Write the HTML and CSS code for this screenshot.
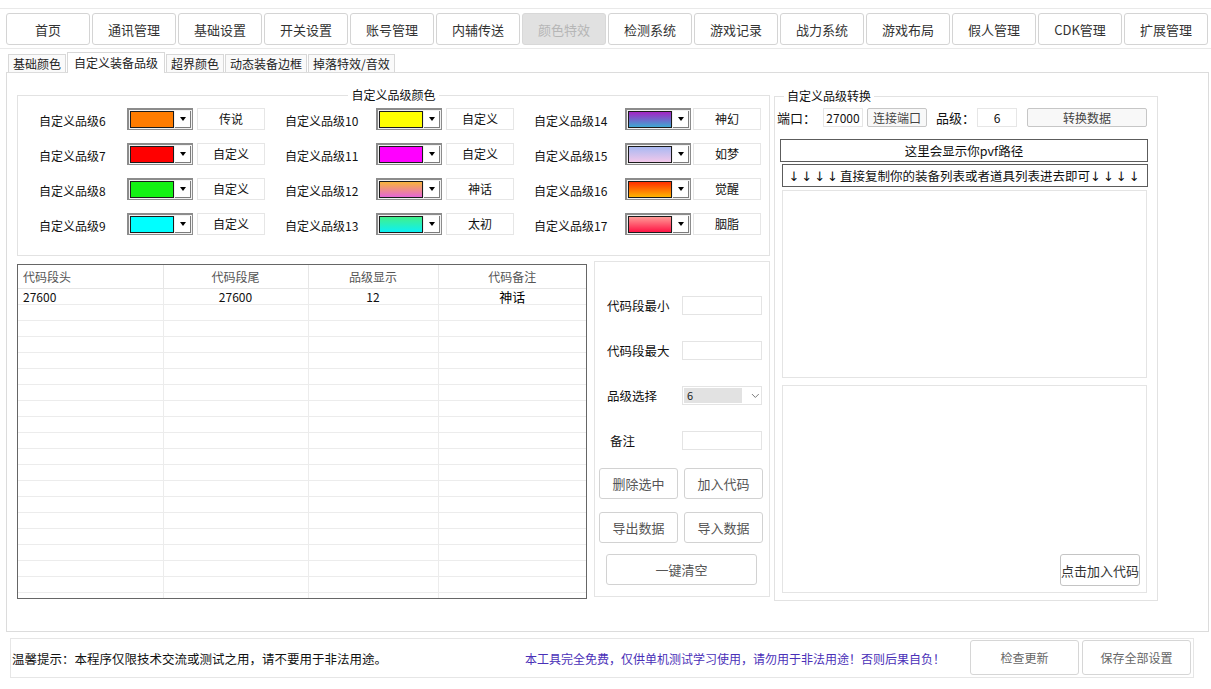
FILE: index.html
```html
<!DOCTYPE html>
<html lang="zh-CN">
<head>
  <meta charset="UTF-8">
  <title>颜色特效 - 自定义装备品级</title>
  <link rel="stylesheet" href="styles.css">
</head>
<body>
  <div class="topnav">
    <button class="nav-btn">首页</button>
    <button class="nav-btn">通讯管理</button>
    <button class="nav-btn">基础设置</button>
    <button class="nav-btn">开关设置</button>
    <button class="nav-btn">账号管理</button>
    <button class="nav-btn">内辅传送</button>
    <button class="nav-btn" disabled>颜色特效</button>
    <button class="nav-btn">检测系统</button>
    <button class="nav-btn">游戏记录</button>
    <button class="nav-btn">战力系统</button>
    <button class="nav-btn">游戏布局</button>
    <button class="nav-btn">假人管理</button>
    <button class="nav-btn">CDK管理</button>
    <button class="nav-btn">扩展管理</button>
  </div>

  <div class="tabs">
    <span class="tab">基础颜色</span>
    <span class="tab active">自定义装备品级</span>
    <span class="tab">超界颜色</span>
    <span class="tab">动态装备边框</span>
    <span class="tab">掉落特效/音效</span>
  </div>

  <div class="panel">
    <div class="left-col">
      <fieldset class="group colors">
        <legend>自定义品级颜色</legend>
        <div class="color-grid">
          <span class="q-label">自定义品级6</span>
          <div class="combo"><span class="swatch q6"></span><span class="drop"></span></div>
          <span class="q-name">传说</span>
          <span class="q-label shift">自定义品级10</span>
          <div class="combo"><span class="swatch q10"></span><span class="drop"></span></div>
          <span class="q-name">自定义</span>
          <span class="q-label shift">自定义品级14</span>
          <div class="combo"><span class="swatch q14"></span><span class="drop"></span></div>
          <span class="q-name">神幻</span>

          <span class="q-label">自定义品级7</span>
          <div class="combo"><span class="swatch q7"></span><span class="drop"></span></div>
          <span class="q-name">自定义</span>
          <span class="q-label shift">自定义品级11</span>
          <div class="combo"><span class="swatch q11"></span><span class="drop"></span></div>
          <span class="q-name">自定义</span>
          <span class="q-label shift">自定义品级15</span>
          <div class="combo"><span class="swatch q15"></span><span class="drop"></span></div>
          <span class="q-name">如梦</span>

          <span class="q-label">自定义品级8</span>
          <div class="combo"><span class="swatch q8"></span><span class="drop"></span></div>
          <span class="q-name">自定义</span>
          <span class="q-label shift">自定义品级12</span>
          <div class="combo"><span class="swatch q12"></span><span class="drop"></span></div>
          <span class="q-name">神话</span>
          <span class="q-label shift">自定义品级16</span>
          <div class="combo"><span class="swatch q16"></span><span class="drop"></span></div>
          <span class="q-name">觉醒</span>

          <span class="q-label">自定义品级9</span>
          <div class="combo"><span class="swatch q9"></span><span class="drop"></span></div>
          <span class="q-name">自定义</span>
          <span class="q-label shift">自定义品级13</span>
          <div class="combo"><span class="swatch q13"></span><span class="drop"></span></div>
          <span class="q-name">太初</span>
          <span class="q-label shift">自定义品级17</span>
          <div class="combo"><span class="swatch q17"></span><span class="drop"></span></div>
          <span class="q-name">胭脂</span>
        </div>
      </fieldset>

      <div class="lower">
        <div class="grid-wrap">
          <table class="code-grid">
            <colgroup>
              <col class="c1"><col class="c2"><col class="c3"><col class="c4">
            </colgroup>
            <thead>
              <tr><th class="left">代码段头</th><th>代码段尾</th><th>品级显示</th><th>代码备注</th></tr>
            </thead>
            <tbody>
              <tr><td>27600</td><td class="mid">27600</td><td class="mid">12</td><td class="mid note">神话</td></tr>
              <tr><td></td><td></td><td></td><td></td></tr>
              <tr><td></td><td></td><td></td><td></td></tr>
              <tr><td></td><td></td><td></td><td></td></tr>
              <tr><td></td><td></td><td></td><td></td></tr>
              <tr><td></td><td></td><td></td><td></td></tr>
              <tr><td></td><td></td><td></td><td></td></tr>
              <tr><td></td><td></td><td></td><td></td></tr>
              <tr><td></td><td></td><td></td><td></td></tr>
              <tr><td></td><td></td><td></td><td></td></tr>
              <tr><td></td><td></td><td></td><td></td></tr>
              <tr><td></td><td></td><td></td><td></td></tr>
              <tr><td></td><td></td><td></td><td></td></tr>
              <tr><td></td><td></td><td></td><td></td></tr>
              <tr><td></td><td></td><td></td><td></td></tr>
              <tr><td></td><td></td><td></td><td></td></tr>
              <tr><td></td><td></td><td></td><td></td></tr>
              <tr><td></td><td></td><td></td><td></td></tr>
              <tr><td></td><td></td><td></td><td></td></tr>
              <tr><td></td><td></td><td></td><td></td></tr>
            </tbody>
          </table>
        </div>

        <div class="editor">
          <div class="form">
            <span class="f-label">代码段最小</span><span class="field"></span>
            <span class="f-label">代码段最大</span><span class="field"></span>
            <span class="f-label">品级选择</span>
            <span class="field select">
              <span class="val">6</span>
              <svg class="chev" width="9" height="6" viewBox="0 0 9 6"><path d="M1 1l3.5 3.5L8 1" fill="none" stroke="#777" stroke-width="1"/></svg>
            </span>
            <span class="f-label indent">备注</span><span class="field"></span>
          </div>
          <div class="actions">
            <button class="act">删除选中</button>
            <button class="act">加入代码</button>
            <button class="act">导出数据</button>
            <button class="act">导入数据</button>
          </div>
          <button class="act clear">一键清空</button>
        </div>
      </div>
    </div>

    <fieldset class="group convert">
      <legend>自定义品级转换</legend>
      <div class="port-row">
        <span class="p-label">端口：</span>
        <span class="p-input">27000</span>
        <button class="p-btn">连接端口</button>
        <span class="p-label lvl">品级：</span>
        <span class="p-input">6</span>
        <button class="p-btn wide">转换数据</button>
      </div>
      <div class="path-box">这里会显示你pvf路径</div>
      <div class="hint-box"><span class="arr">↓↓↓↓</span>直接复制你的装备列表或者道具列表进去即可<span class="arr">↓↓↓↓</span></div>
      <div class="memo"></div>
      <div class="memo out">
        <button class="add-btn">点击加入代码</button>
      </div>
    </fieldset>
  </div>

  <div class="footer">
    <span class="tip">温馨提示：本程序仅限技术交流或测试之用，请不要用于非法用途。</span>
    <span class="free">本工具完全免费，仅供单机测试学习使用，请勿用于非法用途！否则后果自负！</span>
    <div class="foot-btns">
      <button class="foot-btn">检查更新</button>
      <button class="foot-btn">保存全部设置</button>
    </div>
  </div>
</body>
</html>
```

FILE: styles.css
```css
html, body { margin: 0; padding: 0; }
body { width: 1211px; height: 689px; overflow: hidden; background: #fff; color: #222; font-family: "Noto Sans CJK SC", "Microsoft YaHei", sans-serif; font-size: 12px; }
button { font-family: inherit; padding: 0; cursor: pointer; }

/* main menu */
.topnav { margin-top: 8px; border-top: 1px solid #e9e9e9; border-bottom: 1px solid #e9e9e9; padding: 4px 0 3px 6px; display: flex; gap: 2px; }
.nav-btn { width: 84px; height: 32px; background: #fff; border: 1px solid #d4d4d4; border-radius: 3px; color: #333; font-size: 13px; }
.nav-btn:disabled { background: #e1e1e1; border-color: #d8d8d8; color: #b6b6b6; cursor: default; }

/* sub tabs */
.tabs { display: flex; align-items: flex-end; gap: 1px; height: 20px; margin-top: 3px; padding-left: 8px; }
.tab { height: 17px; line-height: 17px; padding: 0 4px; border: 1px solid #d8d8d8; border-bottom: none; background: #fafafa; color: #222; }
.tab.active { height: 20px; line-height: 20px; padding: 0 6px; margin-bottom: -1px; background: #fff; position: relative; z-index: 1; }

.panel { box-sizing: border-box; width: 1203px; height: 560px; margin-left: 6px; border: 1px solid #dcdcdc; padding: 15px 0 0 10px; display: flex; gap: 4px; }
.left-col { width: 753px; }

.group { margin: 0; min-width: 0; box-sizing: border-box; border: 1px solid #e2e2e2; }
.group legend { font-size: 12px; line-height: 14px; padding: 0 3px; color: #111; }

/* quality colours */
.colors { width: 753px; height: 168px; padding: 6px 0 0 0; }
.colors legend { margin: 0 auto; }
.color-grid { margin-left: 21px; display: grid; grid-template-columns: 88px 66px 72px 111px 66px 72px 111px 66px 70px; grid-auto-rows: 22px; row-gap: 13px; align-items: center; }
.q-label { color: #111; padding-top: 3px; }
.q-label.shift { padding-left: 20px; }
.q-name { justify-self: end; box-sizing: border-box; width: 68px; height: 22px; border: 1px solid #e6e6e6; text-align: center; line-height: 20px; color: #111; }

.combo { box-sizing: border-box; width: 66px; height: 22px; display: flex; gap: 1px; padding: 1px; border: 1px solid #8c8c8c; border-width: 2px 1px 1px 2px; background: #f2f2f2; }
.swatch { flex: 1; border: 1px solid #1b1b1b; }
.drop { width: 15px; background: #fff; border-right: 1px solid #7c7c7c; border-bottom: 1px solid #7c7c7c; display: flex; align-items: center; justify-content: center; }
.drop::after { content: ""; border-top: 4px solid #000; border-left: 3.5px solid transparent; border-right: 3.5px solid transparent; }

.q6 { background: #ff7c00; }
.q7 { background: #ff0000; }
.q8 { background: #13f113; }
.q9 { background: #00ffff; }
.q10 { background: #ffff00; }
.q11 { background: #ff00ff; }
.q12 { background: linear-gradient(#f8b43c, #e566d4); }
.q13 { background: linear-gradient(#42f08a, #0cf0f4); }
.q14 { background: linear-gradient(#a424c4, #3ea8d2); }
.q15 { background: linear-gradient(#a9b9f2, #f2c8ea); }
.q16 { background: linear-gradient(#ff2e00, #ffb400); }
.q17 { background: linear-gradient(#ff9a96, #ff1444); }

/* code list */
.lower { display: flex; align-items: flex-start; margin-top: 5px; }
.grid-wrap { box-sizing: border-box; width: 570px; height: 335px; margin-top: 3px; border: 1px solid #666; overflow: hidden; }
.code-grid { border-collapse: collapse; table-layout: fixed; width: 568px; }
.c1 { width: 145px; } .c2 { width: 145px; } .c3 { width: 130px; } .c4 { width: 148px; }
.code-grid th { height: 23px; padding: 0 5px; font-weight: normal; color: #555; border-right: 1px solid #e6e6e6; border-bottom: 1px solid #e6e6e6; }
.code-grid th.left { text-align: left; }
.code-grid td { height: 15px; line-height: 15px; padding: 0 5px; border-right: 1px solid #ececec; border-bottom: 1px solid #ececec; color: #111; }
.code-grid th:last-child, .code-grid td:last-child { border-right: none; }
.code-grid td.mid { text-align: center; }
.code-grid td.note { font-size: 13px; color: #000; }

.editor { box-sizing: border-box; width: 176px; height: 336px; margin-left: 7px; border: 1px solid #e4e4e4; padding: 34px 0 0 4px; }
.form { display: grid; grid-template-columns: 75px 80px; grid-auto-rows: 19px; row-gap: 26px; align-items: center; margin-left: 8px; }
.f-label { font-size: 12.5px; color: #111; }
.f-label.indent { padding-left: 3px; }
.field { box-sizing: border-box; height: 19px; border: 1px solid #e4e4e4; background: #fff; }
.select { display: flex; align-items: center; padding: 1px; }
.select .val { width: 57px; height: 100%; background: #e2e2e2; padding-left: 3px; font-size: 11px; line-height: 15px; }
.select .chev { margin-left: 9px; }
.actions { display: grid; grid-template-columns: 79px 79px; gap: 13px 6px; margin-top: 18px; }
.act { height: 31px; background: #fff; border: 1px solid #d2d2d2; border-radius: 3px; color: #555; font-size: 13px; }
.act.clear { display: block; width: 151px; margin: 11px 0 0 7px; }

/* conversion */
.convert { width: 384px; height: 512px; margin-top: 1px; padding: 5px 9px 0 2px; }
.convert legend { margin-left: 7px; }
.port-row { display: flex; align-items: center; height: 19px; }
.p-label { width: 46px; font-size: 13px; color: #111; }
.p-label.lvl { width: 41px; margin-left: 9px; }
.p-input { box-sizing: border-box; width: 40px; height: 19px; border: 1px solid #e6e6e6; text-align: center; line-height: 17px; color: #111; }
.p-btn { width: 60px; height: 19px; margin-left: 4px; background: #f8f8f8; border: 1px solid #c6c6c6; border-radius: 2px; color: #444; font-size: 12px; }
.p-btn.wide { width: 120px; margin-left: 10px; }
.path-box, .hint-box { box-sizing: border-box; height: 23px; border: 1px solid #5c5c5c; text-align: center; line-height: 21px; font-size: 12.5px; color: #111; }
.path-box { width: 368px; margin: 12px 0 0 3px; }
.hint-box { width: 366px; margin: 2px 0 0 5px; }
.hint-box .arr { font-family: "DejaVu Sans", "Liberation Sans", sans-serif; font-size: 13px; letter-spacing: 2px; }
.memo { box-sizing: border-box; width: 365px; height: 188px; margin: 3px 0 0 5px; border: 1px solid #e4e4e4; }
.memo.out { height: 208px; margin-top: 7px; display: flex; justify-content: flex-end; align-items: flex-end; padding: 0 6px 6px 0; }
.add-btn { width: 80px; height: 32px; background: #fff; border: 1px solid #c4c4c4; border-radius: 3px; color: #333; font-size: 13px; }

/* status bar */
.footer { box-sizing: border-box; width: 1184px; height: 40px; margin: 6px 0 0 10px; border: 1px solid #e6e6e6; padding: 0 2px 0 1px; display: flex; align-items: center; }
.tip { width: 513px; color: #111; font-size: 12.5px; }
.free { color: #4a30b8; }
.foot-btns { margin-left: auto; align-self: flex-start; margin-top: 1px; display: flex; gap: 3px; }
.foot-btn { width: 109px; height: 35px; background: #fff; border: 1px solid #d6d6d6; border-radius: 3px; color: #666; font-size: 12px; }
```
